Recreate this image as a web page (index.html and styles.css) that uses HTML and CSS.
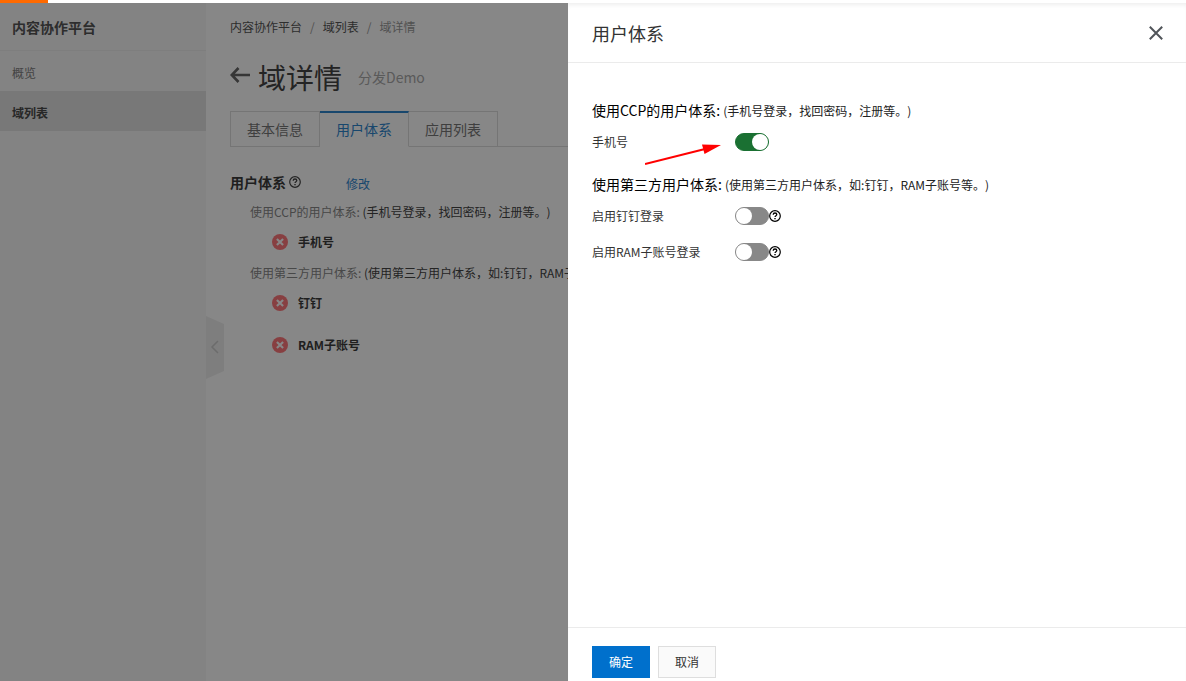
FILE: index.html
```
<!DOCTYPE html>
<html lang="zh-CN">
<head>
<meta charset="utf-8">
<title>用户体系</title>
<link rel="stylesheet" href="styles.css">
</head>
<body>
<svg class="defs" width="0" height="0" aria-hidden="true">
  <symbol id="help" viewBox="0 0 12 12">
    <circle cx="6" cy="6" r="5.3" fill="none" stroke="currentColor" stroke-width="1.2"/>
    <path d="M4.2 4.8C4.2 3.6 5 3 6 3s1.8.6 1.8 1.6C7.800 5.700 6 5.700 6 7.100" fill="none" stroke="currentColor" stroke-width="1.3"/>
    <path d="M5.300 8h1.400v1.200H5.300z" fill="currentColor"/>
  </symbol>
  <symbol id="fail" viewBox="0 0 16 16">
    <circle cx="8" cy="8" r="8" fill="#ff787c"/>
    <path d="M4.900 4.900l6.200 6.200M11.100 4.900l-6.200 6.200" stroke="#fff" stroke-width="2.100"/>
  </symbol>
</svg>
<div class="topbar"><div class="topbar-brand"></div></div>
<div class="page">
  <nav class="sidebar">
    <div class="sidebar-title">内容协作平台</div>
    <a class="nav-item" href="#">概览</a>
    <a class="nav-item nav-active" href="#">域列表</a>
    <button class="collapse" type="button" aria-label="收起">
      <svg width="18" height="63" viewBox="0 0 18 63"><path d="M0 0l18 8v47L0 63z" fill="#efefef"/><path d="M12 25l-6 6 6 6" fill="none" stroke="#ccc" stroke-width="1.500"/></svg>
    </button>
  </nav>
  <main class="main">
    <div class="crumbs"><a href="#">内容协作平台</a><span class="slash">/</span><a href="#">域列表</a><span class="slash">/</span><span class="crumb-now">域详情</span></div>
    <header class="heading">
      <button class="back" type="button" aria-label="返回"><svg width="20" height="16" viewBox="0 0 20 16"><path d="M8.500 1L1.800 8l6.700 7M2 8h18" fill="none" stroke="currentColor" stroke-width="2.600"/></svg></button>
      <h1>域详情</h1><span class="sub">分发Demo</span>
    </header>
    <div class="tabs" role="tablist">
      <button class="tab" role="tab" type="button">基本信息</button>
      <button class="tab tab-active" role="tab" type="button" aria-selected="true">用户体系</button>
      <button class="tab" role="tab" type="button">应用列表</button>
    </div>
    <section class="info">
      <div class="info-head"><h2>用户体系</h2><svg class="help" width="12" height="12"><use href="#help"/></svg><a class="edit" href="#">修改</a></div>
      <p class="group"><span>使用CCP的用户体系:</span> (手机号登录，找回密码，注册等。)</p>
      <div class="state"><svg width="16" height="16"><use href="#fail"/></svg>手机号</div>
      <p class="group"><span>使用第三方用户体系:</span> (使用第三方用户体系，如:钉钉，RAM子账号等。)</p>
      <div class="state">
        <svg width="16" height="16"><use href="#fail"/></svg>钉钉
      </div>
      <div class="state state-next"><svg width="16" height="16"><use href="#fail"/></svg>RAM子账号</div>
    </section>
  </main>
  <div class="mask"></div>
  <aside class="drawer" role="dialog" aria-labelledby="drawer-title">
    <header class="drawer-head">
      <h2 id="drawer-title">用户体系</h2>
      <button class="close" type="button" aria-label="关闭"><svg width="14" height="14" viewBox="0 0 14 14"><path d="M.8.8l12.400 12.400M13.200.8L.8 13.200" stroke="#505459" stroke-width="2"/></svg></button>
    </header>
    <div class="drawer-body">
      <h3>使用CCP的用户体系: <small>(手机号登录，找回密码，注册等。)</small></h3>
      <div class="field"><label for="phone">手机号</label><input id="phone" class="switch" type="checkbox" role="switch" checked>
        <svg class="arrow" width="76" height="22" viewBox="0 0 76 22" aria-hidden="true"><path d="M0 20L60 5" stroke="#f00" stroke-width="2"/><path d="M76 1L57 .5l2.500 9.500z" fill="#f00"/></svg>
      </div>
      <h3>使用第三方用户体系: <small>(使用第三方用户体系，如:钉钉，RAM子账号等。)</small></h3>
      <div class="field"><label for="ding">启用钉钉登录</label><input id="ding" class="switch" type="checkbox" role="switch"><svg width="12" height="12"><use href="#help"/></svg></div>
      <div class="field"><label for="ram">启用RAM子账号登录</label><input id="ram" class="switch" type="checkbox" role="switch"><svg width="12" height="12"><use href="#help"/></svg></div>
    </div>
    <footer class="drawer-foot"><button class="btn btn-primary" type="button">确定</button><button class="btn" type="button">取消</button></footer>
  </aside>
</div>
</body>
</html>
```
FILE: styles.css
```
* { box-sizing: border-box; }
body {
  margin: 0;
  height: 100vh;
  display: flex;
  flex-direction: column;
  overflow: hidden;
  font: 12px/18px "Noto Sans CJK SC", sans-serif;
  text-spacing-trim: space-all;
  color: #333;
  background: #fff;
}
h1, h2, h3, p { margin: 0; }
a { color: inherit; text-decoration: none; }
button { font: inherit; color: inherit; padding: 0; border: 0; background: none; }
svg { display: block; flex: none; }
.defs { position: absolute; }
.topbar { height: 3px; background: #fff; }
.topbar-brand { width: 48px; height: 3px; background: #ff6a00; }
.page { position: relative; flex: 1; min-height: 0; display: flex; overflow: hidden; }

.sidebar { position: relative; width: 206px; flex: none; background: #f7f7f7; }
.sidebar-title { height: 48px; padding: 0 12px; font-size: 14px; font-weight: 700; line-height: 48px; border-bottom: 1px solid #eee; color: #555; }
.nav-item { display: block; height: 40px; padding: 0 12px; line-height: 44px; color: #808080; }
.nav-active { font-weight: 700; color: #4a4a4a; background: #e3e3e3; }
.collapse { position: absolute; left: 100%; top: 313px; }

.main { flex: 1; min-width: 0; padding: 15px 24px; color: #444; }
.crumbs { display: flex; gap: 8px; color: #555; }
.slash, .crumb-now { color: #999; }
.heading { display: flex; align-items: center; margin-top: 17px; height: 48px; }
.back { margin: 0 8px 4px 0; color: #666; }
h1 { font-size: 28px; line-height: 48px; font-weight: 400; }
.sub { margin-left: 16px; font-size: 14px; color: #aaa; }
.tabs { display: flex; margin-top: 10px; margin-right: -24px; border-bottom: 1px solid #dedede; }
.tab { height: 36px; margin-bottom: -1px; padding: 0 16px; font-size: 14px; line-height: 34px; color: #777; border: 1px solid #dedede; }
.tab + .tab { border-left: 0; }
.tab.tab-active { line-height: 33px; color: #2f86cf; border-top: 2px solid #2f86cf; border-bottom-color: #fff; background: #fff; }
.info { margin-top: 24px; white-space: nowrap; }
.info-head { display: flex; align-items: center; height: 24px; }
.info-head h2 { font-size: 14px; line-height: 22px; padding-bottom: 2px; color: #3c3c3c; }
.help { margin: 0 45px 2px 3px; }
.edit { padding-top: 2px; color: #2f86cf; }
.group { margin: 8px 0 0 20px; }
.group span { color: #888; }
.state { display: flex; align-items: center; gap: 10px; height: 18px; margin: 12px 0 13px 42px; font-weight: 700; color: #3c3c3c; }
.state-next { margin-top: 24px; }

.mask { position: absolute; inset: 0; background: rgba(0, 0, 0, .47); }
.drawer { position: absolute; top: 0; right: 0; bottom: 0; width: 618px; max-width: 100%; display: flex; flex-direction: column; background: #fff; box-shadow: inset 0 4px 4px -2px #eee; }
.drawer-head { display: flex; align-items: center; justify-content: space-between; height: 60px; padding: 0 23px 0 24px; border-bottom: 1px solid #ebebeb; }
.drawer-head h2 { font-size: 18px; line-height: 28px; font-weight: 400; }
.drawer-body { flex: 1; padding: 35px 24px; }
h3 { font-size: 14px; line-height: 24px; font-weight: 400; color: #000; }
small { font-size: 12px; color: #222; }
.field { position: relative; display: flex; align-items: center; height: 36px; }
.field + h3 { margin-top: 12px; }
.drawer-body h3 + .field { margin-top: 1px; }
.field label { width: 143px; }
.switch { appearance: none; width: 34px; height: 18px; margin: 0; border: 1px solid #888; border-radius: 9px; background: #888; }
.switch::before { content: ""; display: block; width: 16px; height: 16px; border-radius: 50%; background: #fff; }
.switch:checked { border-color: #1a7032; background: #1a7032; }
.switch:checked::before { margin-left: 16px; }
.field svg { color: #000; }
.arrow { position: absolute; left: 53px; top: 20px; }
.drawer-foot { display: flex; gap: 8px; padding: 18px 24px 3px; border-top: 1px solid #ebebeb; }
.btn { width: 58px; height: 32px; line-height: 30px; border: 1px solid #dedede; background: #fafafa; }
.btn-primary { color: #fff; border-color: #0070cc; background: #0070cc; }
```
